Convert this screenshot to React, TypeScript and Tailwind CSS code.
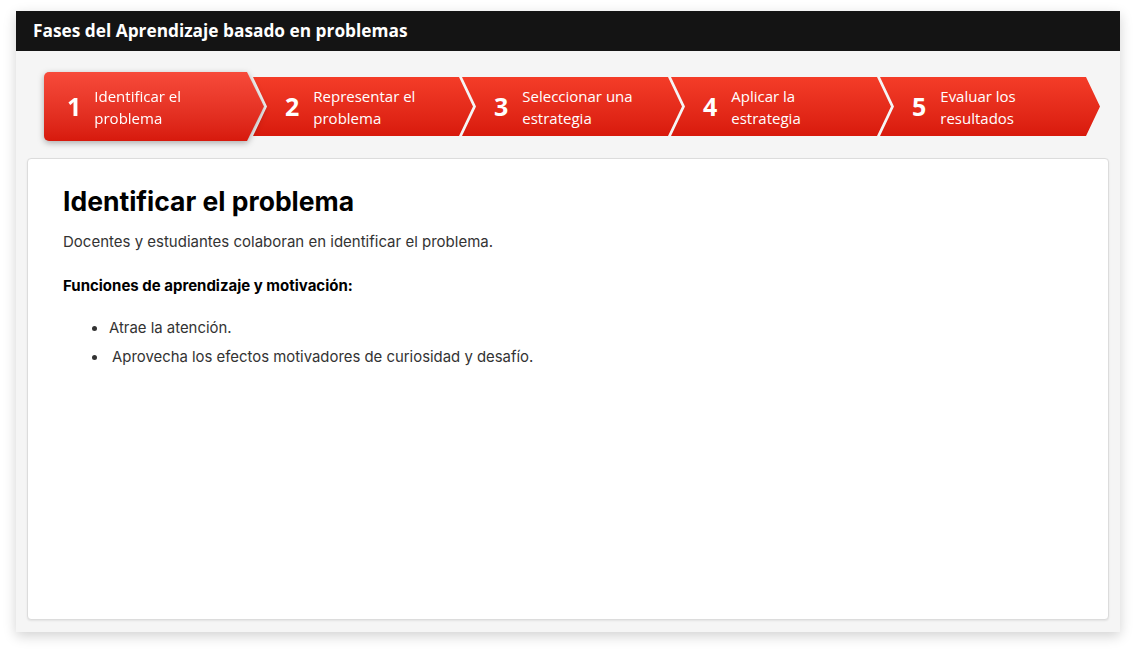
import React from "react";

const steps = [
  { n: "1", label: ["Identificar el", "problema"] },
  { n: "2", label: ["Representar el", "problema"] },
  { n: "3", label: ["Seleccionar una", "estrategia"] },
  { n: "4", label: ["Aplicar la", "estrategia"] },
  { n: "5", label: ["Evaluar los", "resultados"] },
];

export default function App() {
  return (
    <div className="w-[1136px] h-[653px] bg-white pt-[11px] pl-[16px] overflow-hidden">
      <div className="w-[1104px] h-[621px] bg-[#f5f5f5] shadow-[0_4px_12px_rgba(0,0,0,0.18)] flex flex-col">
        <div className="h-[40px] bg-[#141414] flex items-center pl-[17px]">
          <h1 className="text-white font-bold text-[17.3px] [font-family:'Open_Sans',sans-serif]">
            Fases del Aprendizaje basado en problemas
          </h1>
        </div>
        <div className="flex items-center pl-[28px] mt-[21px] h-[69px] [font-family:'Open_Sans',sans-serif]">
          {steps.map((s, i) =>
            i === 0 ? (
              <div key={s.n} className="w-[220px] shrink-0 h-[69px] relative z-10 drop-shadow-[0_2px_3px_rgba(0,0,0,0.3)]">
                <div className="h-full rounded-l-[5px] bg-gradient-to-b from-[#f74a3a] to-[#d7190c] [clip-path:polygon(0_0,calc(100%-17px)_0,100%_50%,calc(100%-17px)_100%,0_100%)] flex items-center pl-[23px] gap-[13px] text-white">
                  <span className="text-[25px] font-bold leading-none">{s.n}</span>
                  <span className="text-[15px] leading-[22px]">
                    {s.label[0]}
                    <br />
                    {s.label[1]}
                  </span>
                </div>
              </div>
            ) : (
              <div
                key={s.n}
                className="w-[220px] shrink-0 h-[59px] -ml-[11px] bg-gradient-to-b from-[#f43c28] to-[#d8190c] [clip-path:polygon(0_0,calc(100%-14px)_0,100%_50%,calc(100%-14px)_100%,0_100%,14px_50%)] flex items-center pl-[32px] gap-[14px] text-white"
              >
                <span className="text-[25px] font-bold leading-none">{s.n}</span>
                <span className="text-[15px] leading-[22px]">
                  {s.label[0]}
                  <br />
                  {s.label[1]}
                </span>
              </div>
            )
          )}
        </div>
        <div className="mx-[11px] mt-[17px] mb-[12px] flex-1 bg-white border border-[#dcdcdc] rounded-[4px] shadow-[0_1px_2px_rgba(0,0,0,0.08)] pl-[35px] pt-[26px] [font-family:Inter,sans-serif] text-[#1a1a1a]">
          <h2 className="text-[26.5px] font-bold leading-[32px] text-black">Identificar el problema</h2>
          <p className="mt-[15px] text-[15px] leading-[20px] text-[#333]">
            Docentes y estudiantes colaboran en identificar el problema.
          </p>
          <p className="mt-[24px] text-[15px] font-bold leading-[20px] text-black">
            Funciones de aprendizaje y motivación:
          </p>
          <ul className="mt-[22px] pl-[45px] list-disc text-[14.9px] leading-[20px] text-[#333] space-y-[9px]">
            <li className="pl-[1px]">Atrae la atención.</li>
            <li className="pl-[4px]">Aprovecha los efectos motivadores de curiosidad y desafío.</li>
          </ul>
        </div>
      </div>
    </div>
  );
}
